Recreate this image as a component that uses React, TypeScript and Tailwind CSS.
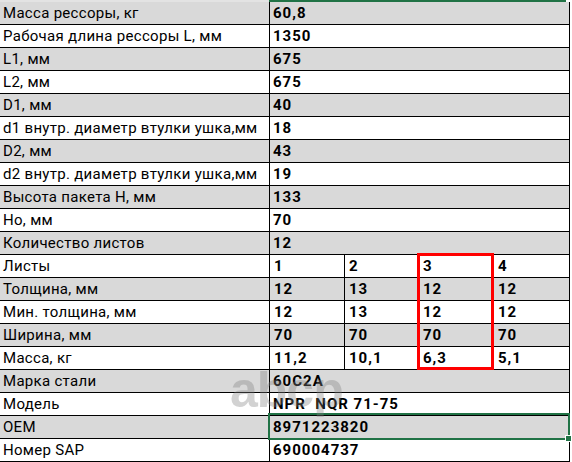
import React from "react";

type Row = { label: string; value?: string; cells?: string[] };

const rows: Row[] = [
  { label: "Масса рессоры, кг", value: "60,8" },
  { label: "Рабочая длина рессоры L, мм", value: "1350" },
  { label: "L1, мм", value: "675" },
  { label: "L2, мм", value: "675" },
  { label: "D1, мм", value: "40" },
  { label: "d1 внутр. диаметр втулки ушка,мм", value: "18" },
  { label: "D2, мм", value: "43" },
  { label: "d2 внутр. диаметр втулки ушка,мм", value: "19" },
  { label: "Высота пакета H, мм", value: "133" },
  { label: "Ho, мм", value: "70" },
  { label: "Количество листов", value: "12" },
  { label: "Листы", cells: ["1", "2", "3", "4"] },
  { label: "Толщина, мм", cells: ["12", "13", "12", "12"] },
  { label: "Мин. толщина, мм", cells: ["12", "13", "12", "12"] },
  { label: "Ширина, мм", cells: ["70", "70", "70", "70"] },
  { label: "Масса, кг", cells: ["11,2", "10,1", "6,3", "5,1"] },
  { label: "Марка стали", value: "60С2А" },
  { label: "Модель", value: "NPR  NQR 71-75" },
  { label: "OEM", value: "8971223820" },
  { label: "Номер SAP", value: "690004737" },
];

export default function App() {
  return (
    <div
      className="relative w-[572px] h-[462px] bg-white overflow-hidden text-black"
      style={{ fontFamily: "Roboto, 'Noto Sans', sans-serif" }}
    >
      {/* watermark (behind cell text) */}
      <div className="flex h-[2px]">
        <div className="w-[269px] bg-[#e3e3e3]" />
        <div className="w-[297px] bg-[#217346]" />
      </div>
      {rows.map((r, i) => (
        <div
          key={i}
          className={`flex h-[23px] w-[570px] border-b border-black ${i % 2 === 0 ? "bg-[#d9d9d9]" : "bg-white"}`}
        >
          <div className="w-[270px] shrink-0 border-r border-black pl-[3px] text-[15px] tracking-[0.3px] leading-[22px] whitespace-nowrap">
            {r.label}
          </div>
          {r.cells ? (
            <div className="grid grid-cols-[75px_74px_75px_76px] w-[300px] border-r border-black">
              {r.cells.map((c, j) => (
                <div
                  key={j}
                  className={`pl-[4px] text-[15px] font-bold tracking-[1px] leading-[22px] ${j < 3 ? "border-r border-black" : ""}`}
                >
                  {c}
                </div>
              ))}
            </div>
          ) : (
            <div className="w-[300px] border-r border-black pl-[3px] text-[15px] font-bold tracking-[1px] leading-[22px] whitespace-pre">
              {r.value}
            </div>
          )}
        </div>
      ))}
      {/* red highlight box */}
      <div className="absolute left-[417px] top-[253px] w-[77px] h-[117px] border-[3px] border-[#ff0000]" />
      {/* selection */}
      <div className="absolute left-[268px] top-[413px] w-[302px] h-[27px] border-2 border-[#217346]" />
      <div className="absolute left-[565px] top-[435px] w-[7px] h-[7px] bg-[#217346] border border-white" />
      {/* watermark */}
      <div
        className="absolute left-[230px] top-[360px] text-[50px] leading-[60px] font-bold text-[#808080] opacity-35 tracking-[-1px] pointer-events-none"
        style={{ fontFamily: "'Liberation Sans', Arial, sans-serif" }}
      >
        abcp
      </div>
    </div>
  );
}
